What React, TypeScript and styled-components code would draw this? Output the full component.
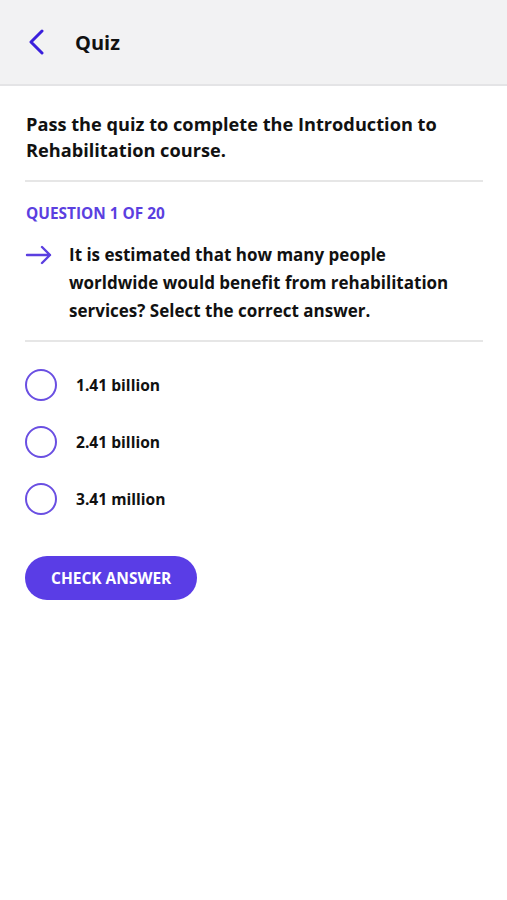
import React from "react";
import styled, { createGlobalStyle } from "styled-components";

const Global = createGlobalStyle`
  html, body { margin: 0; padding: 0; background: #ffffff; }
  body { font-family: "Open Sans", "Noto Sans", sans-serif; color: #111; }
  * { box-sizing: border-box; }
`;

const Page = styled.div`
  width: 507px;
  min-height: 900px;
  background: #fff;
`;

const Header = styled.header`
  height: 86px;
  background: #f2f2f3;
  border-bottom: 2px solid #e4e4e6;
  display: flex;
  align-items: center;
  padding: 0 0 0 25px;
  gap: 28px;
`;

const BackButton = styled.button`
  border: none;
  background: none;
  padding: 0;
  width: 22px;
  height: 28px;
  display: flex;
  align-items: center;
  justify-content: center;
  cursor: pointer;
`;

const HeaderTitle = styled.h1`
  margin: 0;
  font-size: 20px;
  font-weight: 700;
  color: #111;
`;

const Content = styled.main`
  padding: 0 24px 0 25px;
`;

const Intro = styled.p`
  margin: 0;
  padding: 25px 0 17px 1px;
  font-size: 18.2px;
  line-height: 26px;
  font-weight: 700;
  color: #111;
`;

const Divider = styled.hr`
  border: none;
  height: 2px;
  background: #e6e6e6;
  margin: 0;
`;

const QuestionLabel = styled.div`
  margin-top: 21px;
  padding-left: 1px;
  font-size: 15.4px;
  line-height: 21px;
  font-weight: 700;
  color: #5b3fe0;
`;

const QuestionRow = styled.div`
  display: flex;
  gap: 16px;
  margin-top: 17px;
  padding: 0 24px 15px 0;
`;

const ArrowBox = styled.div`
  width: 28px;
  flex: 0 0 28px;
  height: 28px;
  display: flex;
  align-items: center;
`;

const QuestionText = styled.p`
  margin: 0;
  font-size: 17px;
  line-height: 28px;
  font-weight: 700;
  color: #111;
`;

const Options = styled.div`
  display: flex;
  flex-direction: column;
  gap: 25px;
  margin-top: 27px;
`;

const Option = styled.label`
  display: flex;
  align-items: center;
  gap: 19px;
  cursor: pointer;
`;

const Radio = styled.span`
  width: 32px;
  height: 32px;
  border-radius: 50%;
  border: 2px solid #6a4fe2;
  flex: 0 0 32px;
`;

const OptionText = styled.span`
  font-size: 15.6px;
  font-weight: 700;
  color: #111;
`;

const CheckButton = styled.button`
  margin-top: 41px;
  height: 44px;
  padding: 0 26px;
  border: none;
  border-radius: 22px;
  background: #5a3de6;
  color: #fff;
  font-family: "Open Sans", "Noto Sans", sans-serif;
  font-size: 15.5px;
  font-weight: 700;
  cursor: pointer;
`;

const options = ["1.41 billion", "2.41 billion", "3.41 million"];

export default function App() {
  return (
    <Page>
      <Global />
      <Header>
        <BackButton aria-label="Back">
          <svg width="18" height="26" viewBox="0 0 18 26" fill="none">
            <path d="M15 2 L4 13 L15 24" stroke="#3a1fdc" strokeWidth="3" strokeLinecap="round" strokeLinejoin="round" />
          </svg>
        </BackButton>
        <HeaderTitle>Quiz</HeaderTitle>
      </Header>
      <Content>
        <Intro>Pass the quiz to complete the Introduction to Rehabilitation course.</Intro>
        <Divider />
        <QuestionLabel>QUESTION 1 OF 20</QuestionLabel>
        <QuestionRow>
          <ArrowBox>
            <svg width="28" height="20" viewBox="0 0 28 20" fill="none">
              <path d="M2 10 H25 M17 2 L25 10 L17 18" stroke="#5b3fe0" strokeWidth="2.4" strokeLinecap="round" strokeLinejoin="round" />
            </svg>
          </ArrowBox>
          <QuestionText>
            It is estimated that how many people worldwide would benefit from rehabilitation services? Select the correct answer.
          </QuestionText>
        </QuestionRow>
        <Divider />
        <Options>
          {options.map((o) => (
            <Option key={o}>
              <Radio />
              <OptionText>{o}</OptionText>
            </Option>
          ))}
        </Options>
        <CheckButton>CHECK ANSWER</CheckButton>
      </Content>
    </Page>
  );
}
